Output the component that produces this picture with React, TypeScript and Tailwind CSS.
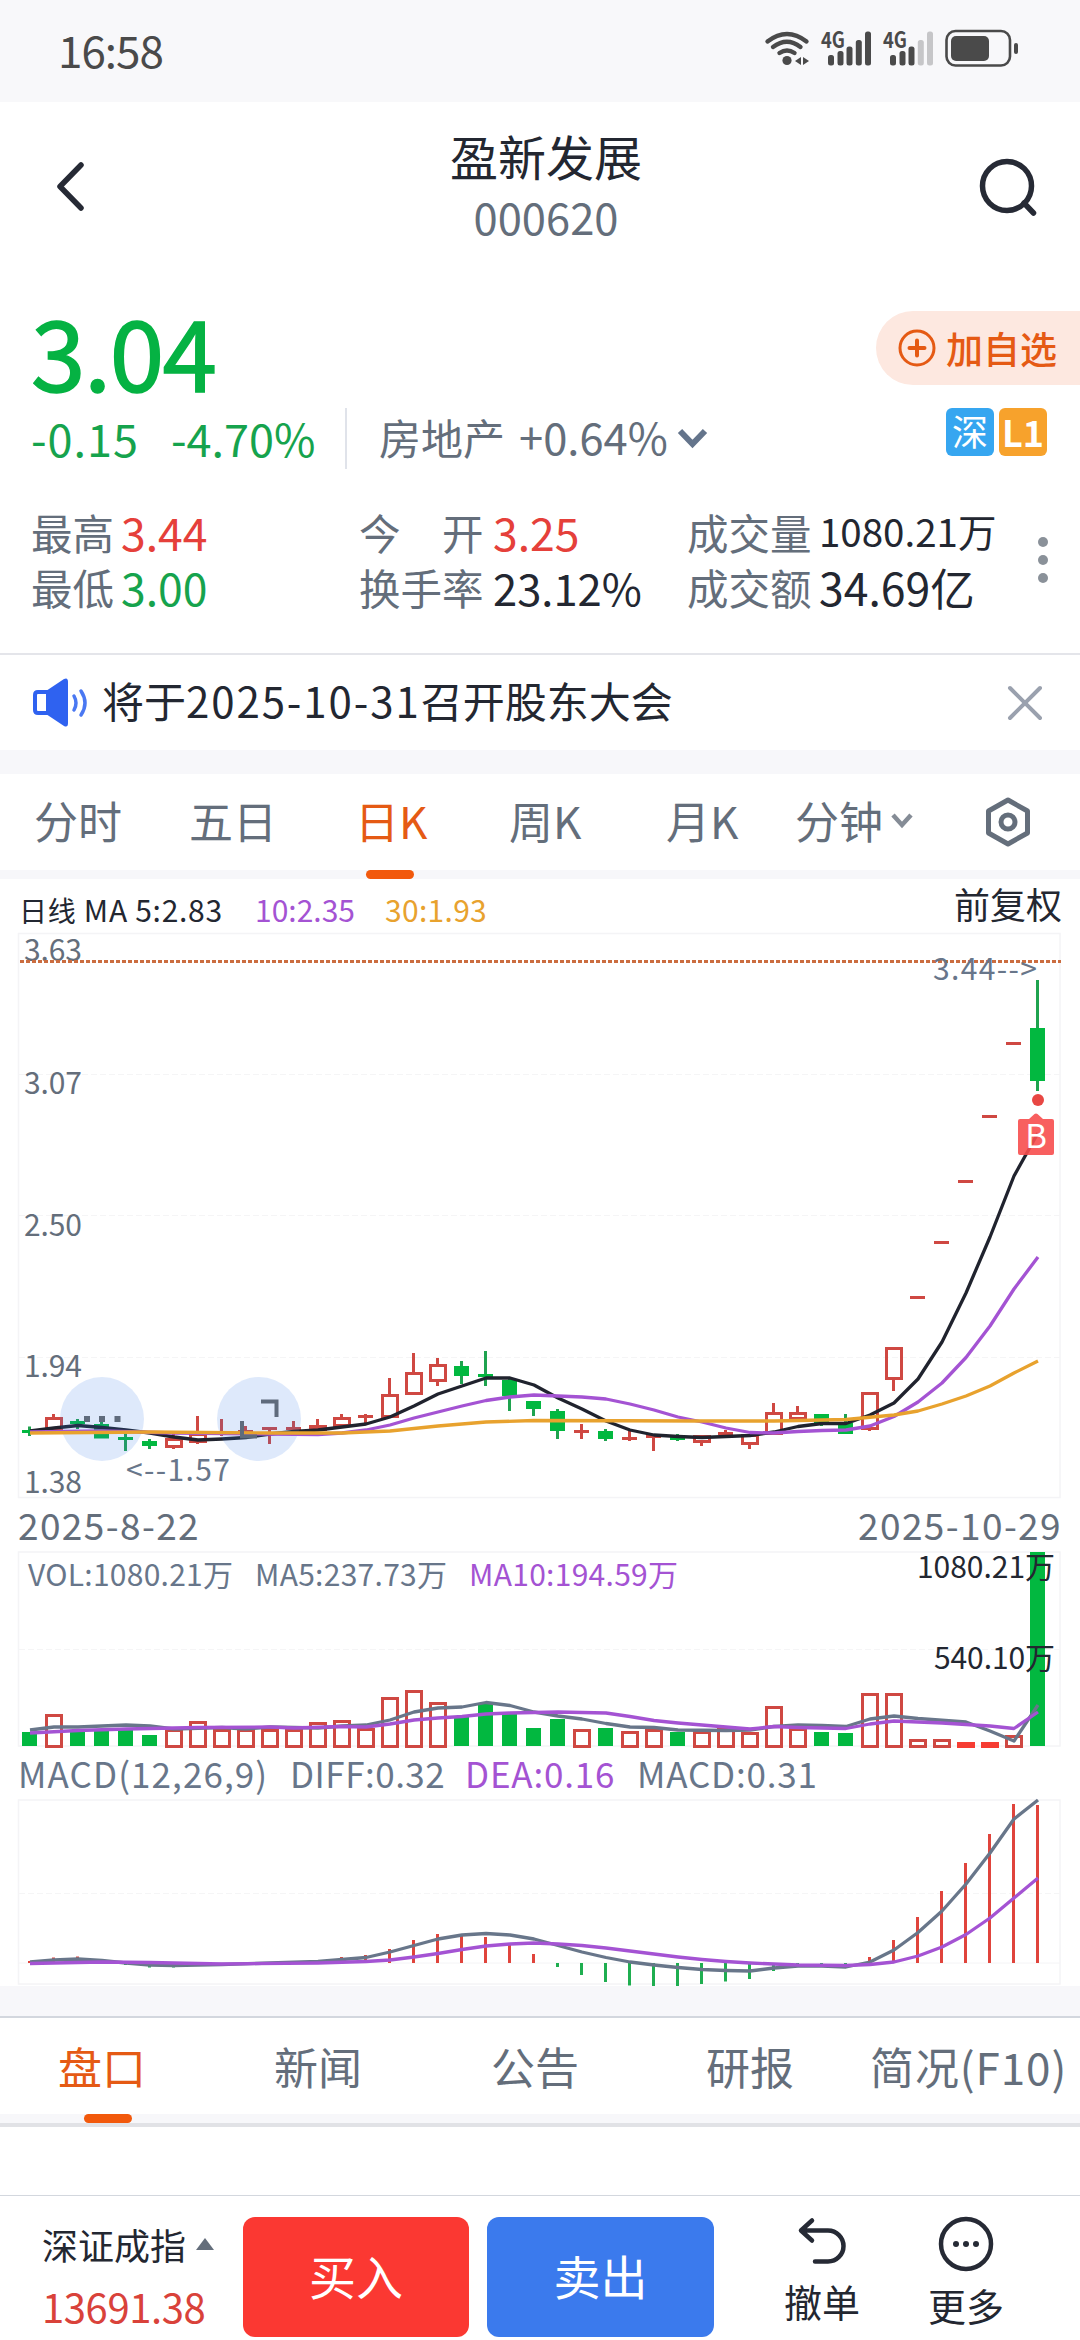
type Candle = {
  hi: number;
  top: number;
  bottom: number;
  lo: number;
  kind: "up" | "down" | "flat";
};

const UP = "#cf4842";
const DOWN = "#02b840";
const WICK = "#1fa34f";
const PURPLE = "#a453d3";
const ORANGE = "#e8a22e";
const SLATE = "#68768a";

const STEP = 24;
const cx = (i: number) => 29.5 + i * STEP;

// [high, body top, body bottom, low, kind] in chart space
const RAW: [number, number, number, number, string][] = [
  [1426.5, 1430, 1433, 1436, "d"],
  [1414, 1417, 1431, 1431, "u"],
  [1419, 1421, 1424, 1429, "d"],
  [1421, 1424, 1438.5, 1438.5, "d"],
  [1433, 1437, 1440, 1451, "d"],
  [1439, 1441, 1446, 1449, "d"],
  [1434, 1438, 1448, 1449, "u"],
  [1416, 1433, 1443, 1444, "u"],
  [1419, 1432, 1435, 1436, "f"],
  [1426, 1430, 1433, 1433, "f"],
  [1427, 1427, 1430, 1444, "f"],
  [1421, 1427, 1430, 1430, "f"],
  [1419, 1425, 1431, 1431, "u"],
  [1414, 1417, 1427, 1428, "u"],
  [1414, 1415, 1418, 1425, "f"],
  [1378, 1394, 1418, 1418, "u"],
  [1353, 1372, 1395, 1395, "u"],
  [1358, 1364, 1382, 1386, "u"],
  [1361, 1366, 1376, 1384, "d"],
  [1351, 1374, 1377, 1386, "d"],
  [1378, 1380, 1396, 1411, "d"],
  [1401, 1401, 1409, 1416, "d"],
  [1409, 1411, 1431, 1439, "d"],
  [1424, 1430, 1433, 1439, "f"],
  [1429, 1431, 1439, 1441, "d"],
  [1431, 1437, 1440, 1441, "f"],
  [1435, 1435, 1438, 1451, "f"],
  [1434, 1436, 1440, 1441, "d"],
  [1435, 1435, 1443, 1446, "u"],
  [1430, 1432, 1435, 1438, "f"],
  [1434, 1434, 1445, 1449, "u"],
  [1403, 1412, 1435, 1435, "u"],
  [1406, 1412, 1420, 1420, "u"],
  [1414, 1414, 1423, 1426, "d"],
  [1414, 1423, 1434, 1434, "d"],
  [1392, 1392, 1430, 1431, "u"],
  [1347, 1347, 1380, 1391, "u"],
  [1296, 1296, 1299, 1299, "f"],
  [1241, 1241, 1244, 1244, "f"],
  [1180, 1180, 1183, 1183, "f"],
  [1115, 1115, 1118, 1118, "f"],
  [1042, 1042, 1045, 1045, "f"],
  [980, 1028, 1081, 1091, "d"],
];

const CANDLES: Candle[] = RAW.map(([hi, top, bottom, lo, k]) => ({
  hi,
  top,
  bottom,
  lo,
  kind: k === "u" ? "up" : k === "d" ? "down" : "flat",
}));

const VOLUME_TOPS = [
  1732, 1714, 1731, 1730, 1729, 1735, 1729, 1721, 1729, 1729, 1729, 1729, 1722,
  1720, 1728, 1697, 1690, 1702, 1717, 1704, 1713, 1728, 1719, 1729, 1728, 1731,
  1729, 1732, 1731, 1728, 1732, 1706, 1728, 1732, 1733, 1693, 1693, 1739, 1739,
  1742, 1742, 1735, 1552,
];

const MACD_TIPS = [
  1961, 1957.5, 1956.5, 1961, 1965, 1967.5, 1967.5, 1965, 1964, 1964, 1964,
  1961, 1960, 1957, 1955, 1949, 1940, 1934, 1936, 1937, 1945, 1954, 1967, 1975,
  1982, 1985.5, 1986, 1986, 1984, 1981.5, 1979, 1971, 1966, 1964, 1965, 1957,
  1940, 1917, 1891, 1863, 1834, 1804, 1805,
];

type Pt = [number, number];

const MA5: Pt[] = [
  [0, 1431], [1, 1428], [2, 1425.5], [3, 1427.5], [4, 1430], [5, 1433], [6, 1437], [7, 1440],
  [8, 1439], [9, 1437.5], [10, 1434], [11, 1431.5], [12, 1430], [13, 1427], [14, 1424],
  [15, 1417], [16, 1406], [17, 1394], [18, 1386], [19, 1378], [20, 1378], [21, 1385],
  [22, 1398], [23, 1409], [24, 1421], [25, 1430], [26, 1435], [27, 1436.5], [28, 1437.5],
  [29, 1436.5], [30, 1435.5], [31, 1432], [32, 1426.5], [33, 1423.5], [34, 1423.5],
  [35, 1415], [36, 1403], [37, 1379], [38, 1342], [39, 1293], [40, 1237], [41, 1176], [42, 1133],
];
const MA10: Pt[] = [
  [0, 1432], [3, 1431], [6, 1433], [10, 1434], [12, 1434.5], [13, 1433], [14, 1430], [15, 1425],
  [16, 1418], [17, 1412], [18, 1406], [19, 1400.5], [20, 1397], [21, 1395], [22, 1396],
  [23, 1397], [24, 1399], [25, 1404], [26, 1410], [27, 1417], [28, 1422], [29, 1428],
  [30, 1432.5], [31, 1433], [32, 1431.5], [33, 1430.5], [34, 1430], [35, 1426], [36, 1416.5],
  [37, 1402], [38, 1383], [39, 1357.5], [40, 1326], [41, 1289], [42, 1257],
];
const MA30: Pt[] = [
  [0, 1433], [5, 1432], [10, 1433], [13, 1433], [15, 1431], [17, 1426], [19, 1422], [21, 1420.5],
  [28, 1421], [31, 1421], [34, 1419.5], [36, 1415], [37, 1411], [38, 1404], [39, 1396],
  [40, 1386], [41, 1373], [42, 1361],
];
const VOL5: Pt[] = [
  [0, 1730], [1, 1727], [2, 1727], [4, 1725], [5, 1726], [6, 1729], [8, 1727.5], [9, 1729],
  [10, 1727], [12, 1728], [13, 1726], [14, 1725], [15, 1720], [16, 1712], [17, 1708],
  [18, 1707], [19, 1702.5], [20, 1705.5], [21, 1712], [22, 1716], [23, 1719], [24, 1723.5],
  [25, 1727], [26, 1727.5], [27, 1730], [29, 1730.5], [30, 1730], [31, 1726.5], [32, 1725],
  [33, 1725.5], [34, 1726.5], [35, 1719], [36, 1716], [37, 1718.5], [39, 1722], [40, 1731],
  [41, 1741], [42, 1705],
];
const VOL10: Pt[] = [
  [0, 1733], [2, 1730.5], [4, 1729], [7, 1727.5], [10, 1727], [11, 1728], [13, 1726.5],
  [14, 1727], [15, 1724], [16, 1720], [17, 1718], [18, 1716.5], [19, 1714], [20, 1713],
  [22, 1712], [24, 1713], [25, 1716.5], [26, 1720.5], [27, 1723], [28, 1725], [29, 1727],
  [30, 1729], [31, 1726.5], [32, 1727.5], [34, 1728.5], [35, 1724], [36, 1721], [38, 1723],
  [39, 1724.5], [40, 1726], [41, 1728.5], [42, 1712],
];
const DIFF: Pt[] = [
  [0, 1962], [1, 1960], [2, 1959], [3, 1960.5], [4, 1963], [5, 1965], [6, 1965.7], [8, 1964.5],
  [10, 1963], [12, 1961.5], [14, 1957.5], [15, 1952], [16, 1945.5], [17, 1939], [18, 1935],
  [19, 1933.5], [20, 1935], [21, 1939], [22, 1945.5], [23, 1952], [24, 1957.5], [25, 1962],
  [26, 1965], [27, 1967.5], [28, 1969.5], [29, 1970.5], [30, 1971], [31, 1968], [32, 1966],
  [33, 1966], [34, 1967], [35, 1962], [36, 1950], [37, 1932.5], [38, 1911], [39, 1884],
  [40, 1853], [41, 1819], [42, 1800],
];
const DEA: Pt[] = [
  [0, 1963.5], [3, 1962], [5, 1962.5], [8, 1964], [12, 1963], [14, 1961.5], [15, 1960],
  [16, 1957], [17, 1953.5], [18, 1949.5], [19, 1946], [20, 1944], [21, 1943], [22, 1944],
  [23, 1945.5], [24, 1948], [25, 1951], [26, 1954], [27, 1957], [28, 1959.5], [29, 1961.5],
  [30, 1963], [32, 1965], [34, 1965.5], [35, 1964.5], [36, 1962], [37, 1956], [38, 1947],
  [39, 1934.5], [40, 1918], [41, 1898], [42, 1878],
];

function Line({ points, color }: { points: Pt[]; color: string }) {
  return (
    <polyline
      points={points.map(([i, y]) => `${cx(i) + 0.5},${y}`).join(" ")}
      fill="none"
      stroke={color}
      strokeWidth={3.3}
      strokeLinejoin="round"
    />
  );
}

function Label({
  x,
  y,
  width,
  size = 30,
  color = "#646e7b",
  children,
}: {
  x: number;
  y: number;
  width: number;
  size?: number;
  color?: string;
  children: string;
}) {
  return (
    <text x={x} y={y} textLength={width} fontSize={size} fill={color}>
      {children}
    </text>
  );
}

function GridLine({ y }: { y: number }) {
  return (
    <line x1={19} x2={1060} y1={y} y2={y} stroke="#f5f5f6" strokeDasharray="6 3" />
  );
}

function StatusBar() {
  return (
    <div className="flex h-[102px] items-center justify-between bg-[#f8f8fa] pb-1 pl-[58px]">
      <span className="text-[44px] leading-none tracking-[-1px] text-[#4a4a4a]">16:58</span>
      <svg width="290" height="70" viewBox="0 0 290 70" className="mr-10 mt-2" fill="#4a4a4a">
        {/* wifi */}
        <g fill="none" stroke="#4a4a4a" strokeWidth="4.4" strokeLinecap="round">
          <path d="M17.500 23.500Q37 8.500 56.500 23.500" />
          <path d="M23 29Q37 18.500 50.500 29" />
          <path d="M29.500 35Q37 30 44.500 35" />
        </g>
        <circle cx="37" cy="42.500" r="4.600" />
        <path d="M51 39v8l-6-4zM53 39v8l6-4z" />
        {/* signal 1 */}
        <text x="71" y="30" fontSize="22" fontWeight="700" textLength="24" lengthAdjust="spacingAndGlyphs">4G</text>
        <rect x="78" y="37" width="6" height="10.500" rx="2.500" />
        <rect x="87.500" y="33" width="6" height="14.500" rx="2.500" />
        <rect x="96.500" y="28.500" width="6" height="19" rx="2.500" />
        <rect x="105.800" y="22" width="6" height="25.500" rx="2.500" />
        <rect x="115" y="13.500" width="6" height="34" rx="2.500" />
        {/* signal 2 */}
        <text x="133" y="30" fontSize="22" fontWeight="700" textLength="24" lengthAdjust="spacingAndGlyphs">4G</text>
        <rect x="140" y="37" width="6" height="10.500" rx="2.500" />
        <rect x="149.500" y="33" width="6" height="14.500" rx="2.500" />
        <rect x="158.500" y="28.500" width="6" height="19" rx="2.500" />
        <rect x="167.800" y="22" width="6" height="25.500" rx="2.500" fill="#c6c6c8" />
        <rect x="177" y="13.500" width="6" height="34" rx="2.500" fill="#c6c6c8" />
        {/* battery */}
        <rect x="196.500" y="13" width="63.500" height="34.500" rx="9" fill="none" stroke="#4a4a4a" strokeWidth="2.600" />
        <rect x="201" y="18" width="38" height="25" rx="5" />
        <rect x="264" y="25" width="4" height="11" rx="2" />
      </svg>
    </div>
  );
}

function Header() {
  return (
    <header className="flex h-[188px] items-start justify-between">
      <svg width="120" height="150" viewBox="0 102 120 150" fill="none" stroke="#262a35" strokeWidth="5.500" strokeLinecap="round" strokeLinejoin="round">
        <path d="M81 165L60 186.500L81 208" />
      </svg>
      <div className="flex flex-col items-center gap-4 pl-3 pt-[29px]">
        <h1 className="text-[48px] leading-none text-[#232731]">盈新发展</h1>
        <span className="text-[43.500px] leading-none text-[#646e7b]">000620</span>
      </div>
      <svg width="120" height="150" viewBox="960 102 120 150" fill="none" stroke="#262a35" strokeWidth="5.500" strokeLinecap="round">
        <circle cx="1007" cy="186" r="24.500" />
        <path d="M1024 203L1033.500 213" />
      </svg>
    </header>
  );
}

function Stat({ label, value, labelWidth, className }: { label: string; value: string; labelWidth: string; className: string }) {
  return (
    <div className="flex h-[55px] items-center whitespace-nowrap leading-none">
      <span className={`${labelWidth} shrink-0 text-[41.500px] text-[#646e7b]`}>{label}</span>
      <span className={className}>{value}</span>
    </div>
  );
}

function Quote() {
  return (
    <section className="border-b-2 border-[#e4e5ea]">
      <div className="flex justify-between">
        <div className="pl-[31px] pt-2.5">
          <div className="text-[98px] leading-none tracking-[-1.500px] text-[#05b243] [-webkit-text-stroke:1.5px_#05b243]">3.04</div>
          <div className="mt-2.5 flex h-[61px] items-center text-[45px] leading-none text-[#16a34d]">
            <span className="w-[140px] pb-[3px] tracking-[1px]">-0.15</span>
            <span className="w-[174px] whitespace-nowrap pb-[3px]">-4.70%</span>
            <span className="h-[61px] w-0.5 bg-[#e0e3ea]" />
            <span className="ml-8 w-[140px] whitespace-nowrap pb-[3px] text-[42px] text-[#646e7b]">房地产</span>
            <span className="w-[156px] whitespace-nowrap pb-[3px] text-[43.500px] text-[#646e7b]">+0.64%</span>
            <svg width="36" height="24" viewBox="0 0 36 24" fill="none" stroke="#64748b" strokeWidth="6">
              <path d="M5 4L17.500 17L30 4" />
            </svg>
          </div>
        </div>
        <div className="flex flex-col items-end pt-[21px]">
          <button className="flex h-[74px] w-[204px] items-center rounded-l-full bg-[#fde8e0] pl-[22px] text-[#e55a14]">
            <svg width="38" height="38" viewBox="0 0 38 38" fill="none" stroke="#e55a14" strokeWidth="3" strokeLinecap="round">
              <circle cx="19" cy="19" r="17" />
              <path d="M19 11.500v15M11.500 19h15" strokeWidth="4" />
            </svg>
            <span className="ml-2.5 whitespace-nowrap text-[37px] font-medium leading-none">加自选</span>
          </button>
          <div className="mr-[33px] mt-[23px] flex gap-[5px] leading-none text-white">
            <span className="flex h-12 w-12 items-center justify-center rounded-md bg-[#36a6f0] pb-1 text-[36px]">深</span>
            <span className="flex h-12 w-12 items-center justify-center rounded-md bg-[#f7a22c] pb-0.5 text-[36px] font-bold">L1</span>
          </div>
        </div>
      </div>
      <div className="mt-9 flex pb-[38px] pl-[31px]">
        <div className="w-[328px]">
          <Stat label="最高" value="3.44" labelWidth="w-[90px]" className="text-[44.500px] text-[#e5403a]" />
          <Stat label="最低" value="3.00" labelWidth="w-[90px]" className="text-[44.500px] text-[#16a34d]" />
        </div>
        <div className="w-[328px]">
          <Stat label="今　开" value="3.25" labelWidth="w-[134px]" className="text-[44.500px] text-[#e5403a]" />
          <Stat label="换手率" value="23.12%" labelWidth="w-[134px]" className="text-[43.500px] text-[#232731]" />
        </div>
        <div className="w-[347px]">
          <Stat label="成交量" value="1080.21万" labelWidth="w-[132px]" className="pb-1 text-[38.500px] text-[#232731]" />
          <Stat label="成交额" value="34.69亿" labelWidth="w-[132px]" className="text-[44.500px] text-[#232731]" />
        </div>
        <div className="flex flex-col gap-2 pl-1 pt-8">
          {[0, 1, 2].map((i) => (
            <span key={i} className="h-2.5 w-2.5 rounded-full bg-[#8a9199]" />
          ))}
        </div>
      </div>
    </section>
  );
}

function Notice() {
  return (
    <div className="flex h-[95px] items-center">
      <svg width="70" height="60" viewBox="26 672 70 60" className="ml-[26px]">
        <path d="M49 691H38q-3 0-3 3v15q0 3 3 3h11" fill="none" stroke="#2f62f0" strokeWidth="4" />
        <path d="M46 690L64 678q4-2 4 3v41q0 5-4 3L46 713z" fill="#2f62f0" />
        <path d="M74 695q4 7 0 14M81 690q8 12 0 24" fill="none" stroke="#4a78f2" strokeWidth="3.500" strokeLinecap="round" />
      </svg>
      <span className="ml-1.5 whitespace-nowrap pb-1.5 text-[42px] leading-none text-[#232731]">
        将于<span className="tracking-[1.900px]">2025-10-31</span>召开股东大会
      </span>
      <svg width="40" height="40" viewBox="0 0 40 40" className="ml-auto mr-[35px]" stroke="#9aa1ae" strokeWidth="4" strokeLinecap="round">
        <path d="M5 5L35 35M35 5L5 35" />
      </svg>
    </div>
  );
}

function PeriodTabs() {
  const tabs = [
    { name: "分时", width: "w-[155px]" },
    { name: "五日", width: "w-[166px]" },
    { name: "日K", width: "w-[154px]" },
    { name: "周K", width: "w-[157px]" },
    { name: "月K", width: "w-[129px]" },
    { name: "分钟", width: "w-[93px]" },
  ];
  return (
    <nav>
      <div className="flex h-24 items-center pl-[34px]">
        {tabs.map((t) => (
          <span
            key={t.name}
            className={`${t.width} ${t.name === "日K" ? "text-[#e55a14]" : "text-[#646e7b]"} whitespace-nowrap pb-[5px] text-[44px] leading-none`}
          >
            {t.name}
          </span>
        ))}
        <svg width="28" height="22" viewBox="0 0 28 22" fill="none" stroke="#858c96" strokeWidth="4.500">
          <path d="M5 4L14 14L23 4" />
        </svg>
        <svg width="50" height="54" viewBox="0 0 50 54" className="ml-[67px]" fill="none" stroke="#646e7b" strokeWidth="5" strokeLinejoin="round">
          <path d="M25 5L44.500 16V38L25 49L5.500 38V16Z" />
          <circle cx="25" cy="27" r="7" />
        </svg>
      </div>
      <div className="h-[9px] bg-[#f7f7fa] pl-[366px]">
        <div className="h-[9px] w-12 rounded-full bg-[#f2590c]" />
      </div>
    </nav>
  );
}

function Candlestick({ c, i }: { c: Candle; i: number }) {
  const x = cx(i);
  const color = c.kind === "down" ? WICK : UP;
  return (
    <g fill={color}>
      <rect x={x - 1.5} y={c.hi} width={3} height={Math.max(0, c.top - c.hi)} />
      <rect x={x - 1.5} y={c.bottom} width={3} height={Math.max(0, c.lo - c.bottom)} />
      {c.kind === "up" ? (
        <rect x={x - 7} y={c.top + 1.5} width={15} height={c.bottom - c.top - 3} fill="none" stroke={UP} strokeWidth={3} />
      ) : (
        <rect x={x - 7.5} y={c.top} width={15} height={c.bottom - c.top} fill={c.kind === "down" ? DOWN : UP} />
      )}
    </g>
  );
}

function PriceChart() {
  return (
    <div>
      <div className="flex h-[51px] justify-between pl-[19px] pr-[18px] leading-none">
        <div className="flex items-center whitespace-nowrap pt-2 text-[30px]">
          <span className="w-[236px] tracking-[0.700px] text-[#232731]"><span className="text-[28px]">日线</span> MA 5:2.83</span>
          <span className="w-[130px] text-[#a453d3]">10:2.35</span>
          <span className="tracking-[0.300px] text-[#e8a22e]">30:1.93</span>
        </div>
        <span className="flex items-center pb-1 text-[36px] text-[#232731]">前复权</span>
      </div>
      <svg width="1080" height="570" viewBox="0 930 1080 570" className="block">
        <rect x="18.500" y="933.500" width="1041.500" height="564" fill="none" stroke="#f4f4f6" strokeWidth="1.500" />
        {[1074.5, 1215.5, 1357.5].map((y) => (
          <GridLine key={y} y={y} />
        ))}
        <Label x={24} y={961} width={58}>3.63</Label>
        <Label x={24} y={1094} width={58}>3.07</Label>
        <Label x={24} y={1236} width={58}>2.50</Label>
        <Label x={24} y={1377} width={58}>1.94</Label>
        <Label x={24} y={1493} width={58}>1.38</Label>
        <line x1="20" x2="1061" y1="961.500" y2="961.500" stroke="#cb6d40" strokeWidth="3" strokeDasharray="4 2" />
        {CANDLES.map((c, i) => (
          <Candlestick key={i} c={c} i={i} />
        ))}
        <Line points={MA5} color="#20232e" />
        <circle cx="102" cy="1419" r="42" fill="#3477e8" fillOpacity="0.160" />
        <circle cx="259" cy="1419" r="42" fill="#3477e8" fillOpacity="0.160" />
        <Line points={MA10} color={PURPLE} />
        <Line points={MA30} color={ORANGE} />
        <g fill="#5f6b7c">
          <rect x="84" y="1416" width="6" height="6" />
          <rect x="99" y="1416" width="6" height="6" />
          <rect x="114.500" y="1416" width="6" height="6" />
        </g>
        <path d="M261 1401.500H276.500V1417M242 1421V1436.500H257" fill="none" stroke="#5f6b7c" strokeWidth="4" />
        <Label x={126} y={1481} width={104} color={SLATE}>{"<--1.57"}</Label>
        <Label x={933} y={980} width={104} color={SLATE}>{"3.44-->"}</Label>
        {/* buy marker */}
        <circle cx="1038" cy="1100" r="6" fill="#e84743" />
        <path d="M1020 1119H1029L1034.500 1114Q1036 1113 1037.500 1114L1043 1119H1052Q1054 1119 1054 1121V1153Q1054 1155 1052 1155H1020Q1018 1155 1018 1153V1121Q1018 1119 1020 1119Z" fill="#f74e4e" fillOpacity="0.900" />
        <text x="1036" y="1148" textAnchor="middle" fontSize="33" fill="#fff">B</text>
      </svg>
    </div>
  );
}

function VolumeChart() {
  return (
    <div>
      <div className="flex h-[50px] items-center justify-between pb-px pl-[18px] pr-[18px] text-[37px] leading-none tracking-[1.400px] text-[#646e7b]">
        <span>2025-8-22</span>
        <span>2025-10-29</span>
      </div>
      <svg width="1080" height="200" viewBox="0 1550 1080 200" className="block">
        <rect x="18.500" y="1552" width="1041.500" height="194" fill="none" stroke="#f4f4f6" strokeWidth="1.500" />
        <GridLine y={1649.5} />
        <Label x={28} y={1586} width={205} color={SLATE}>VOL:1080.21万</Label>
        <Label x={255} y={1586} width={192} color={SLATE}>MA5:237.73万</Label>
        <Label x={469} y={1586} width={209} color={PURPLE}>MA10:194.59万</Label>
        {VOLUME_TOPS.map((top, i) => {
          const x = cx(i);
          if (CANDLES[i].kind === "down") {
            return <rect key={i} x={x - 7.5} y={top} width={15} height={1746 - top} fill={DOWN} />;
          }
          // bars too short to be hollow are filled
          const solid = top === 1742;
          return (
            <rect
              key={i}
              x={x - 7}
              y={top + 1.5}
              width={15}
              height={1748 - top - 3}
              fill={solid ? "#f63d33" : "none"}
              stroke={solid ? "#f63d33" : UP}
              strokeWidth={3}
            />
          );
        })}
        <Line points={VOL5} color={SLATE} />
        <Line points={VOL10} color={PURPLE} />
        <Label x={917} y={1578} width={138} color="#232731">1080.21万</Label>
        <Label x={934} y={1669} width={121} color="#232731">540.10万</Label>
      </svg>
    </div>
  );
}

function MacdChart() {
  return (
    <div>
      <div className="flex h-12 items-center whitespace-nowrap pb-1 pl-[18px] text-[35px] leading-none tracking-[0.800px] text-[#68768a]">
        <span className="w-[272px] tracking-[1.100px]">MACD(12,26,9)</span>
        <span className="w-[175px] tracking-[0.500px]">DIFF:0.32</span>
        <span className="w-[172px] text-[#a453d3]">DEA:0.16</span>
        <span>MACD:0.31</span>
      </div>
      <svg width="1080" height="188" viewBox="0 1798 1080 188" className="block">
        <rect x="18.500" y="1800" width="1041.500" height="184" fill="none" stroke="#f4f4f6" strokeWidth="1.500" />
        <GridLine y={1893.5} />
        <line x1="19" x2="1060" y1="1963" y2="1963" stroke="#f4f4f6" />
        {MACD_TIPS.map((tip, i) => (
          <line
            key={i}
            x1={cx(i)}
            x2={cx(i)}
            y1={1963}
            y2={tip}
            stroke={tip < 1963 ? "#e0443c" : "#1fae50"}
            strokeWidth={3}
          />
        ))}
        <Line points={DIFF} color={SLATE} />
        <Line points={DEA} color={PURPLE} />
      </svg>
    </div>
  );
}

function InfoTabs() {
  return (
    <nav className="border-t-2 border-[#d3d7de]">
      <div className="flex h-24 items-center whitespace-nowrap pl-[58px] pb-px text-[44px] leading-none text-[#646e7b]">
        <span className="w-[216px] text-[#e55a14]">盘口</span>
        <span className="w-[217px]">新闻</span>
        <span className="w-[215px]">公告</span>
        <span className="w-[164px]">研报</span>
        <span className="tracking-[0.900px]">简况(F10)</span>
      </div>
      <div className="h-[9px] bg-[#f7f7fa] pl-[84px]">
        <div className="h-[9px] w-12 rounded-full bg-[#f2590c]" />
      </div>
      <div className="h-1 bg-[#e1e2e6]" />
    </nav>
  );
}

function TradeBar() {
  return (
    <footer className="flex h-[145px] border-t border-[#d3d7de] leading-none text-[#232731]">
      <div className="w-[243px] pl-[42px] pt-[30px]">
        <div className="flex items-center text-[36px]">
          深证成指
          <svg width="18" height="12" viewBox="0 0 18 12" className="ml-2.5" fill="#646e7b">
            <path d="M9 0L18 12H0Z" />
          </svg>
        </div>
        <div className="mt-6 text-[40px] tracking-[-0.400px] text-[#d9423a]">13691.38</div>
      </div>
      <button className="mt-[21px] flex h-[120px] w-[226px] items-center justify-center rounded-xl bg-[#fb3832] pb-1.5 text-[47px] text-white">买入</button>
      <button className="ml-[18px] mt-[21px] flex h-[120px] w-[227px] items-center justify-center rounded-xl bg-[#3b7aed] pb-1.5 text-[47px] text-white">卖出</button>
      <div className="ml-[71px] flex w-[74px] flex-col items-center pt-[18px]">
        <svg width="60" height="56" viewBox="792 2214 60 56" fill="none" stroke="#262a35" strokeWidth="4.500" strokeLinecap="round" strokeLinejoin="round">
          <path d="M812 2220.500L801 2230.500L812 2240.500M801 2230.500H828A15.500 15.500 0 0 1 828 2261.500H815" />
        </svg>
        <span className="mt-3 whitespace-nowrap text-[38px]">撤单</span>
      </div>
      <div className="ml-[69px] flex w-[76px] flex-col items-center pt-5">
        <svg width="56" height="56" viewBox="0 0 56 56" fill="#262a35">
          <circle cx="28" cy="28" r="25" fill="none" stroke="#262a35" strokeWidth="4.500" />
          <circle cx="18" cy="28" r="3" />
          <circle cx="28" cy="28" r="3" />
          <circle cx="38" cy="28" r="3" />
        </svg>
        <span className="mt-3.5 whitespace-nowrap text-[38px]">更多</span>
      </div>
    </footer>
  );
}

export default function App() {
  return (
    <main className="flex h-[2340px] w-[1080px] flex-col overflow-hidden bg-white font-['Noto_Sans_CJK_SC',sans-serif]">
      <StatusBar />
      <Header />
      <Quote />
      <Notice />
      <div className="h-6 bg-[#f7f7fa]" />
      <PeriodTabs />
      <PriceChart />
      <VolumeChart />
      <MacdChart />
      <div className="h-[30px] bg-[#f7f7fa]" />
      <InfoTabs />
      <div className="flex-1" />
      <TradeBar />
    </main>
  );
}
